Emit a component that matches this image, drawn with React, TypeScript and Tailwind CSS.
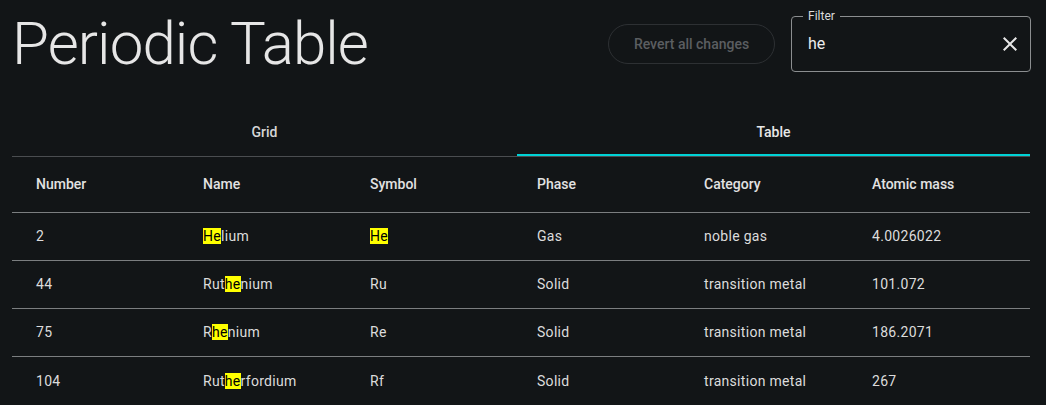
import React from "react";

const rows = [
  { n: "2", name: ["", "He", "lium"], sym: ["", "He", ""], phase: "Gas", cat: "noble gas", mass: "4.0026022" },
  { n: "44", name: ["Rut", "he", "nium"], sym: ["Ru", "", ""], phase: "Solid", cat: "transition metal", mass: "101.072" },
  { n: "75", name: ["R", "he", "nium"], sym: ["Re", "", ""], phase: "Solid", cat: "transition metal", mass: "186.2071" },
  { n: "104", name: ["Rut", "he", "rfordium"], sym: ["Rf", "", ""], phase: "Solid", cat: "transition metal", mass: "267" },
];

function Hl({ parts }: { parts: string[] }) {
  return (
    <span>
      {parts[0]}
      {parts[1] && <span className="bg-[#ffff00] text-black">{parts[1]}</span>}
      {parts[2]}
    </span>
  );
}

const gridCols = "grid grid-cols-[175px_167px_167px_167px_168px_1fr]";

export default function App() {
  return (
    <div
      className="h-[405px] w-full overflow-hidden bg-[#121517] pl-3 pr-4 text-[#e3e3e3]"
      style={{ fontFamily: "Roboto, 'Noto Sans', sans-serif" }}
    >
      <div className="-mr-px flex items-center pt-2">
        <h1 className="flex-1 text-[60px] font-light leading-[72px] tracking-[-0.9px] text-[#e6e6e6]">
          Periodic Table
        </h1>
        <button className="mr-4 h-10 w-[167px] rounded-full border border-[#2d3033] text-[14px] font-medium text-[#5b5e61]">
          Revert all changes
        </button>
        <div className="relative h-14 w-[240px] rounded-[4px] border border-[#8b8e90]">
          <span className="absolute -top-[9px] left-[11px] bg-[#121517] px-[5px] text-[12px] leading-[16px] text-[#dcdcdc]">
            Filter
          </span>
          <div className="flex h-full items-center pl-4 pr-2">
            <span className="flex-1 text-[16px] text-[#ececec]">he</span>
            <svg width="24" height="24" viewBox="0 0 24 24" className="fill-[#e6e6e6]">
              <path d="M19 6.41 17.59 5 12 10.59 6.41 5 5 6.41 10.59 12 5 17.59 6.41 19 12 13.41 17.59 19 19 17.59 13.41 12z" />
            </svg>
          </div>
        </div>
      </div>

      <div className="mt-7 flex h-[49px] border-b border-[#4a4d50]">
        <div className="relative flex w-[505px] items-center justify-center text-[14px] font-medium text-[#d6d6d6]">
          Grid
        </div>
        <div className="relative flex flex-1 items-center justify-center text-[14px] font-medium text-[#e8e8e8]">
          Table
          <div className="absolute bottom-0 left-0 right-0 h-[2px] bg-[#00d2d6]" />
        </div>
      </div>

      <div className={`${gridCols} h-[56px] items-center border-b border-[#7b7e80] text-[14px] font-medium text-[#e2e2e2]`}>
        <div className="pl-6">Number</div>
        <div className="pl-4">Name</div>
        <div className="pl-4">Symbol</div>
        <div className="pl-4">Phase</div>
        <div className="pl-4">Category</div>
        <div className="pl-4">Atomic mass</div>
      </div>

      {rows.map((r) => (
        <div
          key={r.n}
          className={`${gridCols} h-[48px] items-center border-b border-[#7b7e80] text-[14px] tracking-[0.3px] text-[#dcdcdc] last:border-b-0`}
        >
          <div className="pl-6">{r.n}</div>
          <div className="pl-4"><Hl parts={r.name} /></div>
          <div className="pl-4"><Hl parts={r.sym} /></div>
          <div className="pl-4">{r.phase}</div>
          <div className="pl-4">{r.cat}</div>
          <div className="pl-4">{r.mass}</div>
        </div>
      ))}
    </div>
  );
}
